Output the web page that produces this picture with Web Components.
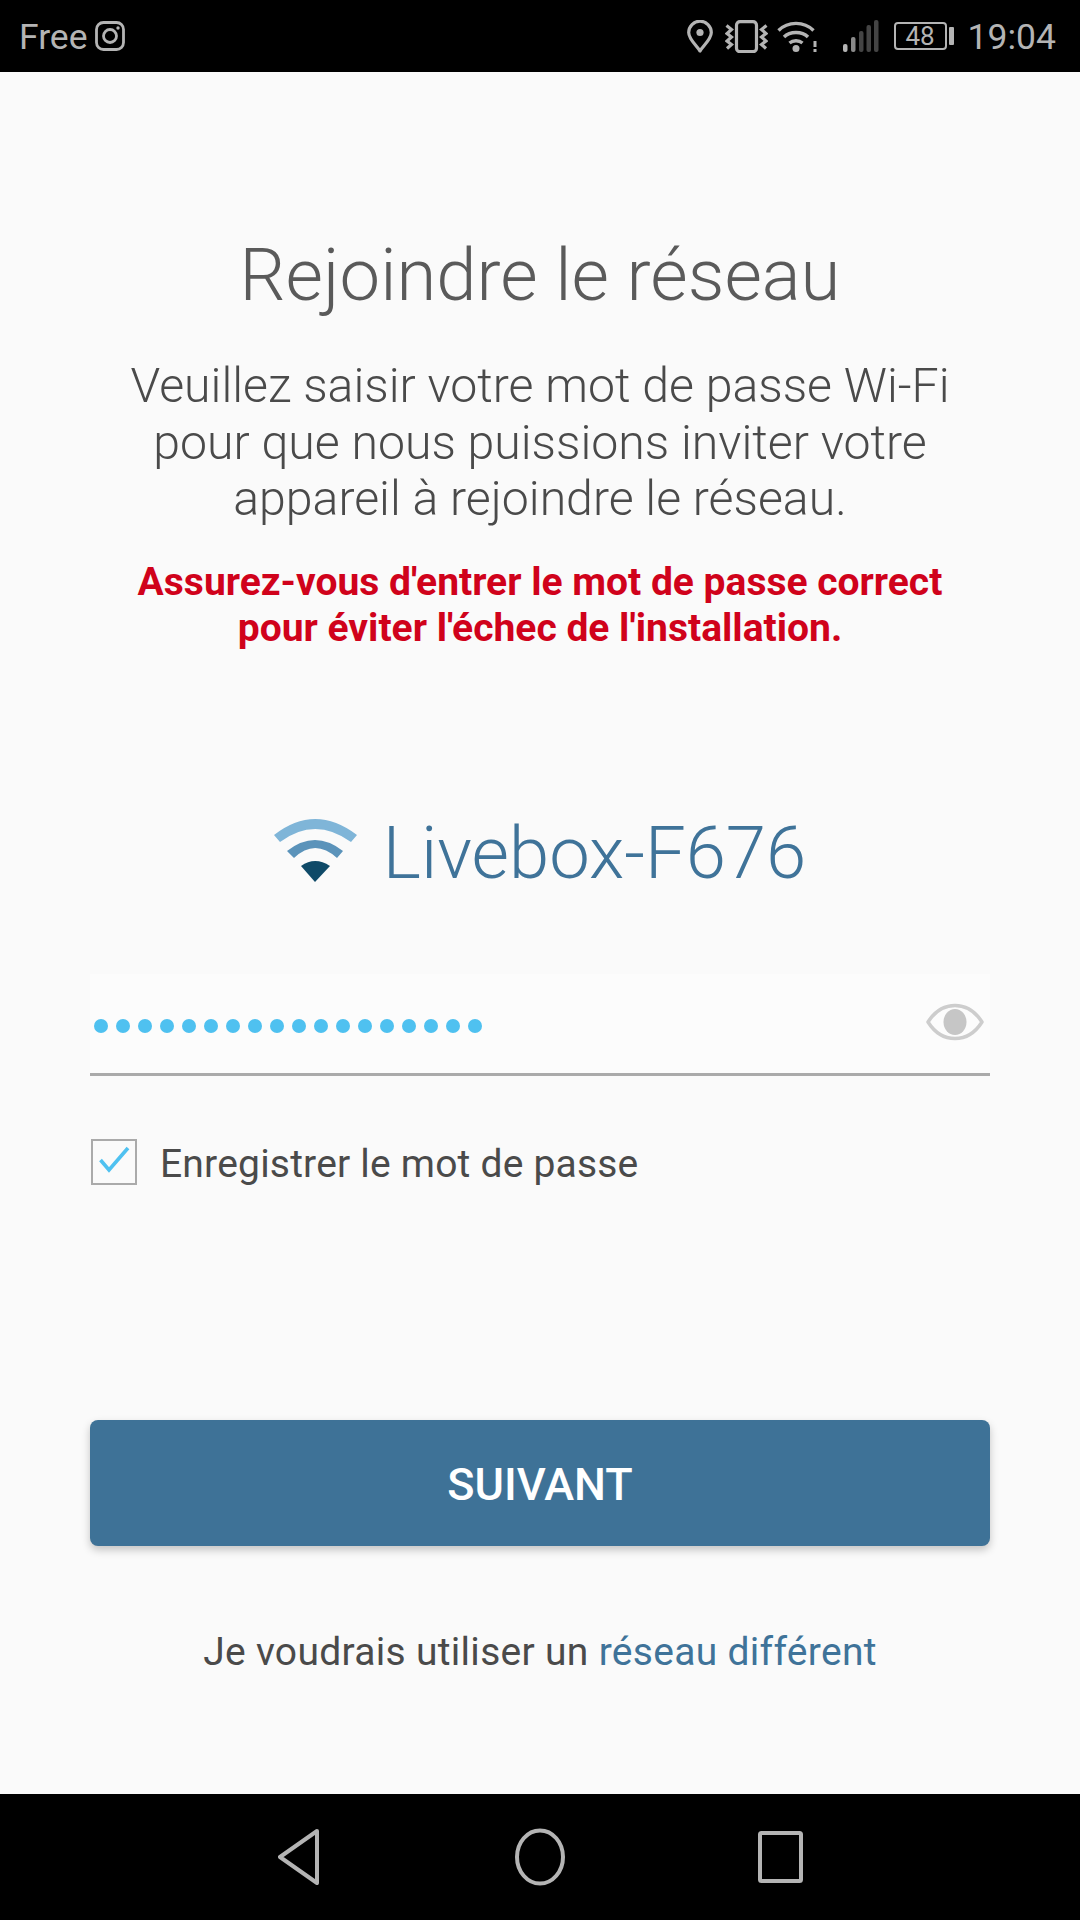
<!DOCTYPE html>
<html lang="fr">
<head>
<meta charset="utf-8">
<title>Rejoindre le réseau</title>
<style>
  html, body { margin: 0; padding: 0; background: #fafafa; }
  body { width: 1080px; height: 1920px; font-family: Roboto, "Noto Sans", sans-serif; }
  join-page { height: 100%; }
</style>
</head>
<body>
<join-page>
  <status-bar slot="top" carrier="Free" time="19:04" battery="48"></status-bar>

  <h-title>Rejoindre le réseau</h-title>
  <intro-text>Veuillez saisir votre mot de passe Wi-Fi<br>pour que nous puissions inviter votre<br>appareil à rejoindre le réseau.</intro-text>
  <warn-text>Assurez-vous d'entrer le mot de passe correct<br>pour éviter l'échec de l'installation.</warn-text>
  <network-name>Livebox-F676</network-name>
  <password-field length="18"></password-field>
  <check-row>Enregistrer le mot de passe</check-row>
  <primary-button>SUIVANT</primary-button>
  <other-network>Je voudrais utiliser un <a>réseau différent</a></other-network>

  <nav-bar slot="bottom"></nav-bar>
</join-page>

<script>
function simple (name, css) {
  customElements.define(name, class extends HTMLElement {
    constructor () {
      super()
      this.attachShadow({ mode: 'open' })
      this.shadowRoot.innerHTML = `<style>${css}</style><slot></slot>`
    }
  })
}

class JoinPage extends HTMLElement {
  constructor () {
    super()
    this.attachShadow({ mode: 'open' })
    this.shadowRoot.innerHTML = `
      <style>
        :host { display: flex; flex-direction: column; background: #fafafa; }
        main { flex: 1; display: flex; flex-direction: column; padding: 0 90px; }
      </style>
      <slot name="top"></slot>
      <main><slot></slot></main>
      <slot name="bottom"></slot>
    `
  }
}

class StatusBar extends HTMLElement {
  constructor () {
    super()
    this.attachShadow({ mode: 'open' })
  }

  connectedCallback () {
    this.shadowRoot.innerHTML = `
      <style>
        :host { display: flex; align-items: center; height: 72px; flex: none; background: #000; color: #b4b4b4; padding: 0 24px 0 19px; font-size: 35.5px; line-height: 68px; }
        .left, .right { display: flex; align-items: center; }
        .left { gap: 7px; }
        .right { margin-left: auto; }
        span { padding-top: 2px; }
        svg { display: block; flex: none; }
        .batt { margin-left: 15px; width: 53px; height: 28px; box-sizing: border-box; border: 2px solid #b4b4b4; border-radius: 4px; font-size: 26px; line-height: 24px; text-align: center; }
        .nub { width: 5px; height: 18px; background: #b4b4b4; border-radius: 1px; margin-left: 2px; }
        .time { margin-left: 14px; }
      </style>
      <div class="left">
        <span>${this.getAttribute('carrier')}</span>
        <svg width="30" height="30" viewBox="0 0 30 30" fill="none" stroke="#b4b4b4" stroke-width="2.8">
          <rect x="1.5" y="1.5" width="27" height="27" rx="7"/>
          <circle cx="15" cy="15" r="6.5"/>
          <circle cx="23" cy="7" r="1.7" fill="#b4b4b4" stroke="none"/>
        </svg>
      </div>
      <div class="right">
        <svg width="26" height="33" viewBox="0 0 26 33" fill="none" stroke="#b4b4b4" stroke-width="3.2">
          <path d="M13 31 C9 25 1.7 19 1.7 12.5 A11.3 11.3 0 0 1 24.3 12.5 C24.3 19 17 25 13 31 Z" stroke-linejoin="round"/>
          <circle cx="13" cy="12.5" r="3.6" fill="#b4b4b4" stroke="none"/>
        </svg>
        <svg style="margin-left:12px" width="43" height="33" viewBox="0 0 43 33" fill="none" stroke="#b4b4b4" stroke-width="3.2">
          <rect x="11.5" y="1.7" width="20" height="30" rx="3.5"/>
          <path d="M1.5 5.5 L6.5 9.5 L2 13.5 L6.5 17 L2 21 L6.5 24.5 L2 28.5"/>
          <path d="M41.5 5.5 L36.5 9.5 L41 13.5 L36.5 17 L41 21 L36.5 24.5 L41 28.5"/>
        </svg>
        <svg style="margin-left:9px" width="40" height="33" viewBox="0 0 40 33" fill="none" stroke="#b4b4b4" stroke-width="3.4">
          <path d="M1.5 10.5 C11 1 27 1 36.5 10.5"/>
          <path d="M7 17 C13 11 25 11 31 17"/>
          <path d="M12.5 23 C16 20 22 20 25.5 23"/>
          <circle cx="19" cy="28.5" r="3.5" fill="#b4b4b4" stroke="none"/>
          <rect x="36.5" y="21" width="3" height="6" fill="#b4b4b4" stroke="none"/>
          <rect x="36.5" y="29" width="3" height="3" fill="#b4b4b4" stroke="none"/>
        </svg>
        <svg style="margin-left:26px" width="36" height="33" viewBox="0 0 36 33">
          <rect x="0" y="24" width="4.5" height="8" rx="2" fill="#b4b4b4"/>
          <rect x="8" y="17" width="4.5" height="15" rx="2" fill="#8a8a8a"/>
          <rect x="16" y="11" width="4.5" height="21" rx="2" fill="#444"/>
          <rect x="23.5" y="5" width="4.5" height="27" rx="2" fill="#444"/>
          <rect x="31" y="0" width="4.5" height="32" rx="2" fill="#444"/>
        </svg>
        <div class="batt">${this.getAttribute('battery')}</div>
        <div class="nub"></div>
        <span class="time">${this.getAttribute('time')}</span>
      </div>
    `
  }
}

class NetworkName extends HTMLElement {
  constructor () {
    super()
    this.attachShadow({ mode: 'open' })
    this.shadowRoot.innerHTML = `
      <style>
        :host { display: flex; align-items: center; justify-content: center; gap: 25px; margin-top: 161px; height: 84px; color: #3f7399; font-size: 72.4px; font-weight: 300; line-height: 84px; }
        svg { display: block; flex: none; margin-top: -6px; }
      </style>
      <svg width="84" height="66" viewBox="275 818 84 66">
        <path fill="#7fb5d8" d="M275 835 Q316 803 358 835 L352 842 Q316 816 281 842 Z"/>
        <path fill="#5b93ba" d="M288 851 Q316 829 344 851 L338 858 Q316 838 295 858 Z"/>
        <path fill="#0f4a68" d="M316 882 L302 866 Q316 856 331 866 Z"/>
      </svg>
      <slot></slot>
    `
  }
}

class PasswordField extends HTMLElement {
  constructor () {
    super()
    this.attachShadow({ mode: 'open' })
  }

  connectedCallback () {
    const n = Number(this.getAttribute('length'))
    this.shadowRoot.innerHTML = `
      <style>
        :host { display: flex; align-items: center; height: 102px; box-sizing: border-box; margin-top: 78px; background: #fcfcfc; border-bottom: 3px solid #aaa; padding: 0 6px 0 4px; }
        .dots { display: flex; gap: 8px; margin-top: 4px; }
        .dots i { width: 14px; height: 14px; border-radius: 50%; background: #4fc1f0; }
        svg { display: block; margin-left: auto; margin-top: -4px; }
      </style>
      <div class="dots">${'<i></i>'.repeat(n)}</div>
      <svg width="58" height="38" viewBox="0 0 58 38">
        <path d="M2 19 C16 -3 42 -3 56 19 C42 41 16 41 2 19 Z" fill="none" stroke="#cdcdcd" stroke-width="3.5" stroke-linejoin="round"/>
        <ellipse cx="29" cy="19" rx="11.5" ry="13" fill="#c6c6c6"/>
      </svg>
    `
  }
}

class CheckRow extends HTMLElement {
  constructor () {
    super()
    this.attachShadow({ mode: 'open' })
    this.shadowRoot.innerHTML = `
      <style>
        :host { display: flex; align-items: center; gap: 23px; margin-top: 63px; padding-left: 1px; height: 46px; color: #4a4a4a; font-size: 39px; letter-spacing: 0.2px; }
        .box { width: 46px; height: 46px; box-sizing: border-box; border: 2px solid #aaa; flex: none; }
        .label { padding-top: 4px; }
        svg { display: block; }
      </style>
      <div class="box">
        <svg width="42" height="42" viewBox="0 0 42 42" fill="none" stroke="#4fc1f0" stroke-width="3.6">
          <path d="M7.5 19 L16 29 L35 7"/>
        </svg>
      </div>
      <span class="label"><slot></slot></span>
    `
  }
}

class PrimaryButton extends HTMLElement {
  constructor () {
    super()
    this.attachShadow({ mode: 'open' })
    this.shadowRoot.innerHTML = `
      <style>
        :host { display: flex; align-items: center; justify-content: center; height: 126px; margin-top: 235px; padding-top: 2px; box-sizing: border-box; flex: none; background: #3e7297; border-radius: 8px; box-shadow: 0 4px 8px rgba(0,0,0,.22); color: #fff; font-size: 45px; font-weight: 500; }
      </style>
      <slot></slot>
    `
  }
}

class NavBar extends HTMLElement {
  constructor () {
    super()
    this.attachShadow({ mode: 'open' })
    this.shadowRoot.innerHTML = `
      <style>
        :host { display: flex; align-items: center; justify-content: center; gap: 193px; height: 126px; flex: none; background: #000; padding-left: 2px; box-sizing: border-box; }
        svg { display: block; flex: none; }
      </style>
      <svg width="44" height="58" viewBox="0 0 44 58" fill="none" stroke="#b4b4b4" stroke-width="4" stroke-linejoin="round">
        <path d="M39 3 L2 29 L39 55 Z"/>
      </svg>
      <svg width="50" height="58" viewBox="0 0 50 58" fill="none" stroke="#b4b4b4" stroke-width="4">
        <ellipse cx="25" cy="29" rx="23" ry="26.5"/>
      </svg>
      <svg width="46" height="52" viewBox="0 0 46 52" fill="none" stroke="#b4b4b4" stroke-width="4" stroke-linejoin="round">
        <rect x="2" y="2" width="41" height="48" rx="1.5"/>
      </svg>
    `
  }
}

simple('h-title', ':host { display: block; margin-top: 165px; text-align: center; color: #5a5a5a; font-size: 72.4px; font-weight: 300; line-height: 78px; }')
simple('intro-text', ':host { display: block; margin-top: 43px; text-align: center; color: #4a4a4a; font-size: 48.2px; font-weight: 300; line-height: 56.5px; }')
simple('warn-text', ':host { display: block; margin-top: 31.5px; text-align: center; color: #d0021b; font-size: 39px; font-weight: 700; line-height: 46px; }')
simple('other-network', ':host { display: block; margin-top: 84px; text-align: center; color: #4a4a4a; font-size: 39px; letter-spacing: 0.3px; line-height: 44px; } ::slotted(a) { color: #3f7399; }')

customElements.define('join-page', JoinPage)
customElements.define('status-bar', StatusBar)
customElements.define('network-name', NetworkName)
customElements.define('password-field', PasswordField)
customElements.define('check-row', CheckRow)
customElements.define('primary-button', PrimaryButton)
customElements.define('nav-bar', NavBar)
</script>
</body>
</html>
